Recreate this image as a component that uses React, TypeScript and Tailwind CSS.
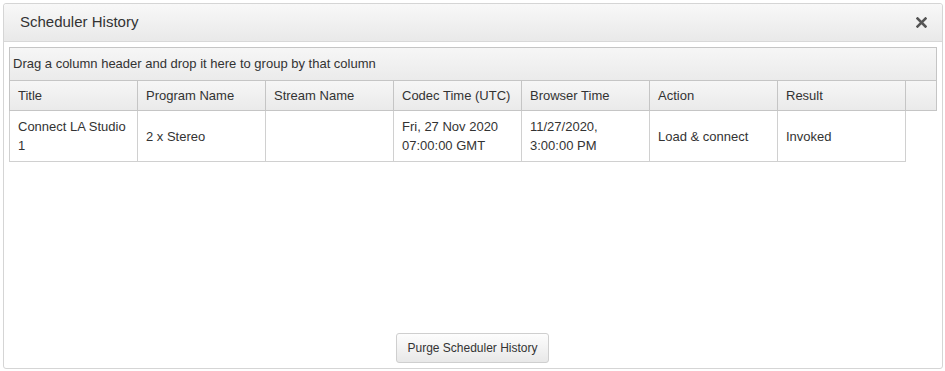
import React from 'react';

const columns = ['Title', 'Program Name', 'Stream Name', 'Codec Time (UTC)', 'Browser Time', 'Action', 'Result'];

const rows = [
  {
    id: 1,
    cells: ['Connect LA Studio 1', '2 x Stereo', '', 'Fri, 27 Nov 2020 07:00:00 GMT', '11/27/2020, 3:00:00 PM', 'Load & connect', 'Invoked'],
  },
];

const CloseIcon: React.FC = () => (
  <svg width="11" height="11" viewBox="0 0 11 11">
    <path d="M1.5 1.5 L9.5 9.5 M9.5 1.5 L1.5 9.5" stroke="#555" strokeWidth="2.5" strokeLinecap="square" />
  </svg>
);

export default function App() {
  return (
    <div className="w-[945px] h-[371px] bg-white p-[3px] pr-[2px] pb-[2px] font-['Liberation_Sans',Arial,sans-serif] text-[13px] text-[#333]">
      <div className="h-full flex flex-col border border-[#d5d5d5] rounded-[3px] bg-white">
        {/* title bar */}
        <div className="h-[38px] shrink-0 flex items-center justify-between pl-4 pr-[15px] border-b border-[#d8d8d8] bg-gradient-to-b from-[#f8f8f8] to-[#e9e9e9] rounded-t-[3px]">
          <span className="text-[15px] text-[#333]">Scheduler History</span>
          <CloseIcon />
        </div>

        {/* grid */}
        <div className="mx-[5px] mt-[5px] border border-[#c5c5c5]">
          <div className="h-[33px] flex items-center px-[3px] border-b border-[#c5c5c5] bg-gradient-to-b from-[#f6f6f6] to-[#ebebeb]">
            Drag a column header and drop it here to group by that column
          </div>
          <div className="flex h-[29px] bg-gradient-to-b from-[#f6f6f6] to-[#eaeaea]">
            {columns.map((c, i) => (
              <div
                key={c}
                className={`${i === 0 ? 'w-[127px]' : 'w-[128px] border-l border-[#c5c5c5]'} shrink-0 flex items-center px-2`}
              >
                {c}
              </div>
            ))}
            <div className="flex-1 border-l border-[#c5c5c5]"></div>
          </div>
        </div>
        <div className="mx-[5px] flex">
          {rows.map(r => (
            <div key={r.id} className="flex border-l border-r border-b border-[#d0d0d0] leading-[19px]">
              {r.cells.map((c, i) => (
                <div
                  key={i}
                  className={`${i === 0 ? 'w-[127px]' : 'w-[128px] border-l border-[#d0d0d0]'} shrink-0 h-[50px] flex items-center px-2`}
                >
                  {c}
                </div>
              ))}
            </div>
          ))}
        </div>

        <div className="flex-1"></div>

        {/* footer */}
        <div className="flex justify-center pb-[5px] pr-[1px]">
          <button className="h-[30px] px-[10px] text-[12px] text-[#333] border border-[#cfcfcf] rounded-[3px] bg-gradient-to-b from-[#fdfdfd] to-[#e8e8e8]">
            Purge Scheduler History
          </button>
        </div>
      </div>
    </div>
  );
}
